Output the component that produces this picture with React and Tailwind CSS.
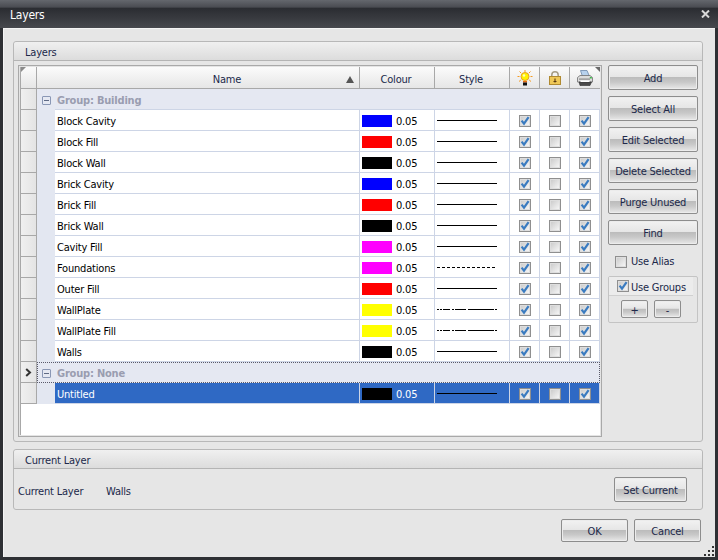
const font = "font-['Tahoma','DejaVu_Sans_Condensed','DejaVu_Sans',sans-serif] tracking-[-0.2px]";

const layers = [
  ["Block Cavity", "bg-[#0000ff]", "solid"],
  ["Block Fill", "bg-[#ff0000]", "solid"],
  ["Block Wall", "bg-black", "solid"],
  ["Brick Cavity", "bg-[#0000ff]", "solid"],
  ["Brick Fill", "bg-[#ff0000]", "solid"],
  ["Brick Wall", "bg-black", "solid"],
  ["Cavity Fill", "bg-[#ff00ff]", "solid"],
  ["Foundations", "bg-[#ff00ff]", "dash"],
  ["Outer Fill", "bg-[#ff0000]", "solid"],
  ["WallPlate", "bg-[#ffff00]", "chain"],
  ["WallPlate Fill", "bg-[#ffff00]", "chain"],
  ["Walls", "bg-black", "solid"],
];

function Check({ on, className = "" }) {
  return (
    <span className={`block w-[12px] h-[12px] border border-[#8f8f8f] bg-gradient-to-br from-[#c8c8c8] to-[#fafafa] shadow-[inset_0_0_0_1px_#dedede] shrink-0 ${className}`}>
      {on && (
        <svg viewBox="0 0 10 10" className="block w-full h-full">
          <path d="M1.6 4.6 L4 7.6 L8.6 1.2" fill="none" stroke="#3a7bc0" strokeWidth="2.2" />
        </svg>
      )}
    </span>
  );
}

function Btn({ label, className = "" }) {
  return (
    <button className={`flex items-center justify-center rounded-[2px] border border-[#8d8d8d] pt-[2px] bg-[linear-gradient(to_bottom,#f2f2f2_0%,#e6e6e6_46%,#bcbcbc_50%,#c8c8c8_70%,#e8e8e8_100%)] text-[#20284a] text-[11px] leading-none shadow-[inset_0_0_0_1px_#ececec] ${className}`}>
      {label}
    </button>
  );
}

function Line({ kind }) {
  return (
    <svg width="60" height="4" className="block mt-[2px]">
      {kind === "solid" && <line x1="0" x2="60" y1="1.5" y2="1.5" stroke="#000" strokeWidth="1" />}
      {kind === "dash" && <line x1="0" x2="60" y1="1.5" y2="1.5" stroke="#000" strokeWidth="1" strokeDasharray="3 2" />}
      {kind === "chain" && <path d="M0 1.5H2M3 1.5H5M6 1.5H13M15 1.5H17M18 1.5H29M31 1.5H57M58 1.5H60" stroke="#000" strokeWidth="1" fill="none" />}
    </svg>
  );
}

function Row({ name, color, line, selected }) {
  const text = selected ? "text-white bg-[#2f69c4]" : "text-black bg-white";
  const bd = "border-r border-b border-[#cdd5e6]";
  return (
    <div className="flex h-[21px]">
      <Indicator />
      <div className="w-[18px] bg-[#e3e7f1] shrink-0" />
      <div className={`w-[305px] pl-[2px] flex items-center text-[11px] ${bd} ${text} shrink-0`}>
        <span className="mt-[4px]">{name}</span>
      </div>
      <div className={`w-[75px] flex items-center pl-[2px] gap-[4px] text-[11px] ${bd} ${text} shrink-0`}>
        <span className={`w-[30px] h-[12px] mt-[2px] ${color}`} />
        <span className="mt-[4px]">0.05</span>
      </div>
      <div className={`w-[75px] flex items-center pl-[2px] ${bd} ${text} shrink-0`}><Line kind={line} /></div>
      {[true, false, true].map((on, i) => (
        <div key={i} className={`w-[30px] flex items-center justify-center ${bd} ${text} shrink-0 pl-px`}><Check on={on} className="mt-[2px]" /></div>
      ))}
    </div>
  );
}

function Indicator({ arrow }) {
  return (
    <div className="w-[16px] shrink-0 border-r border-b border-[#a8a8a8] bg-[linear-gradient(to_right,#f0f0f0,#e4e4e4)] flex items-center justify-center">
      {arrow && (
        <svg width="7" height="9" viewBox="0 0 7 9"><path d="M1.2 1 L5 4.5 L1.2 8" fill="none" stroke="#333" strokeWidth="2" /></svg>
      )}
    </div>
  );
}

function Group({ name, focus }) {
  return (
    <div className="flex h-[21px]">
      <Indicator arrow={focus} />
      <div className={`flex-1 bg-[#e5e8f2] flex items-center pl-[5px] text-[11px] font-bold text-[#9a9db0] ${focus ? "outline outline-1 -outline-offset-1 outline-dotted outline-[#5a5a6a]" : "bg-[linear-gradient(#cdd5e6,#cdd5e6)] bg-no-repeat bg-[position:18px_100%] bg-[size:100%_1px]"}`}>
        <span className="w-[9px] h-[9px] rounded-[1px] border border-[#8a97b5] flex items-center justify-center mr-[6px] mt-[2px] shrink-0">
          <span className="w-[5px] h-px bg-[#5f6a85]" />
        </span>
        <span className="mt-[4px]">{name}</span>
      </div>
    </div>
  );
}

function Head({ w, children, last }) {
  return (
    <div className={`${w} shrink-0 flex items-center justify-center border-r border-[#a8a8a8] text-[11px] text-[#20284a] relative ${last ? "border-r-0" : ""}`}>
      {children}
    </div>
  );
}

const Lamp = () => (
  <svg width="16" height="16" viewBox="0 0 16 16">
    <path d="M8 0V2M2.5 1.5L4 3M13.5 1.5L12 3M0.5 6.5H2.5M13.5 6.5H15.5M2 11.5L3.8 10M14 11.5L12.2 10" stroke="#f59a20" strokeWidth="1" />
    <circle cx="8" cy="6.5" r="4" fill="#fff200" stroke="#e8a020" />
    <circle cx="7" cy="5.5" r="1.2" fill="#fffbc0" />
    <rect x="6" y="11" width="4" height="1.5" fill="#e86a10" />
    <rect x="6" y="12.5" width="4" height="3" fill="#111" />
  </svg>
);
const Lock = () => (
  <svg width="12" height="14" viewBox="0 0 12 14">
    <path d="M2.8 6V4a3.2 3.2 0 0 1 6.4 0V6" fill="none" stroke="#a59c84" strokeWidth="1.5" />
    <rect x="0.5" y="5.5" width="11" height="8" fill="#efc858" stroke="#b08a30" />
    <path d="M6 7.5v4M4.5 10.5h3" stroke="#5a3a10" strokeWidth="1.1" />
  </svg>
);
const Printer = () => (
  <svg width="16" height="16" viewBox="0 0 16 16">
    <path d="M3.5 0.5L10 0.5L12.5 6.5H5.5Z" fill="#b8d2ee" stroke="#6c88aa" strokeWidth="0.8" />
    <path d="M0.5 7.5L3 5.5H13L15.5 7.5V12H0.5Z" fill="#dcdcdc" stroke="#6e6e6e" strokeWidth="0.8" />
    <rect x="2" y="8.5" width="11" height="1.2" fill="#8a8a8a" />
    <rect x="12.8" y="7" width="2" height="1.5" fill="#3fb84a" />
    <path d="M2 12H14.5L13 15.5H3Z" fill="#4a4a4a" stroke="#2e2e2e" strokeWidth="0.6" />
    <rect x="3.5" y="10.5" width="9" height="1.5" fill="#fff" />
  </svg>
);

function GroupHead({ children }) {
  return (
    <div className="h-[19px] pl-[11px] pt-[4px] flex items-center text-[11px] text-[#20284a] rounded-t-[3px] border-b border-[#b4b4b4] bg-[linear-gradient(to_bottom,#f0f0f0,#dcdcdc)]">
      {children}
    </div>
  );
}

export default function App() {
  return (
    <div className={`${font} w-[718px] h-[560px] flex flex-col bg-[#2e3034] overflow-hidden`}>
      <div className="h-[28px] shrink-0 flex items-center justify-between pl-[10px] pr-[8px] bg-[linear-gradient(to_bottom,#64676d_0%,#4a4c52_25%,#2b2d32_30%,#3a3c41_70%,#47494e_100%)]">
        <span className="text-white text-[12px] mt-[1px]">Layers</span>
        <svg width="9" height="8" viewBox="0 0 9 8" className="mt-[-1px]"><path d="M1 0.5L8 7.5M8 0.5L1 7.5" stroke="#d8d8d8" strokeWidth="2" /></svg>
      </div>
      <div className="flex-1 mx-[3px] mb-[3px] bg-[#e6e6e6] border-t border-l border-[#f4f4f4] relative flex flex-col pt-[12px] pl-[9px] pr-[12px]">
        <div className="h-[401px] shrink-0 rounded-[3px] border border-[#b8b8b8] flex flex-col">
          <GroupHead>Layers</GroupHead>
          <div className="flex flex-1 pt-[4px] pl-[4px] pb-[4px]">
            <div className="w-[584px] h-[372px] border border-[#a9a9a9] bg-[#e4e4e4] p-px flex flex-col shrink-0">
              <div className="flex-1 border-l border-[#a8a8a8] bg-white flex flex-col overflow-hidden relative">
                <div className="h-[22px] flex shrink-0 border-b border-[#a8a8a8] bg-[linear-gradient(to_bottom,#fbfbfb,#e6e6e6)]">
                  <Head w="w-[16px]" />
                  <Head w="w-[323px]">
                    <span className="pl-[58px] mt-[6px]">Name</span>
                    <svg width="8" height="7" viewBox="0 0 8 7" className="absolute right-[5px] top-[9px]"><path d="M4 0L8 7H0Z" fill="#555" /></svg>
                  </Head>
                  <Head w="w-[75px]"><span className="mt-[6px] mr-[2px]">Colour</span></Head>
                  <Head w="w-[75px]"><span className="mt-[6px] mr-[2px]">Style</span></Head>
                  <Head w="w-[30px]"><Lamp /></Head>
                  <Head w="w-[30px]"><Lock /></Head>
                  <Head w="w-[30px]" last><Printer /></Head>
                </div>
                <svg width="5" height="5" viewBox="0 0 5 5" className="absolute left-0 top-0"><path d="M0 0H5L0 5Z" fill="#8a8a8a" /></svg>
                <svg width="5" height="5" viewBox="0 0 5 5" className="absolute right-0 top-0"><path d="M0 0H5V5Z" fill="#6a6a6a" /></svg>
                <Group name="Group: Building" />
                {layers.map(([n, c, l]) => <Row key={n} name={n} color={c} line={l} />)}
                <Group name="Group: None" focus />
                <Row name="Untitled" color="bg-black" line="solid" selected />
              </div>
            </div>
            <div className="ml-[6px] w-[90px] flex flex-col shrink-0">
              <div className="flex flex-col gap-[6px]">
                {["Add", "Select All", "Edit Selected", "Delete Selected", "Purge Unused", "Find"].map((b) => (
                  <Btn key={b} label={b} className="w-[90px] h-[25px]" />
                ))}
              </div>
              <div className="flex items-center gap-[4px] pl-[7px] mt-[10px] h-[13px] text-[11px] text-[#20284a]">
                <Check /> <span className="mt-[2px]">Use Alias</span>
              </div>
              <div className="mt-[8px] h-[47px] rounded-[2px] border border-[#c4c4c4] flex flex-col">
                <div className="h-[19px] w-[84px] flex items-center gap-[2px] pl-[8px] text-[11px] text-[#20284a] bg-[#ececec] border-b border-[#d0d0d0]">
                  <Check on /> <span className="mt-[5px]">Use Groups</span>
                </div>
                <div className="flex gap-[6px] pl-[12px] pt-[4px]">
                  <Btn label="+" className="w-[27px] h-[18px]" />
                  <Btn label="-" className="w-[27px] h-[18px]" />
                </div>
              </div>
            </div>
          </div>
        </div>
        <div className="mt-[7px] h-[61px] shrink-0 rounded-[3px] border border-[#b8b8b8] flex flex-col">
          <GroupHead>Current Layer</GroupHead>
          <div className="flex items-center flex-1 pl-[4px] pr-[15px] text-[11px] text-[#20284a]">
            <span className="w-[88px] mt-[6px]">Current Layer</span>
            <span className="mt-[6px]">Walls</span>
            <Btn label="Set Current" className="ml-auto mt-[1px] w-[73px] h-[25px]" />
          </div>
        </div>
        <div className="flex justify-end gap-[6px] mt-[9px] pr-[2px]">
          <Btn label="OK" className="w-[67px] h-[23px]" />
          <Btn label="Cancel" className="w-[67px] h-[23px]" />
        </div>
        <svg width="10" height="10" viewBox="0 0 10 10" className="absolute right-[1px] bottom-[1px]">
          <path d="M8 0h2v2H8zM4 4h2v2H4zM8 4h2v2H8zM0 8h2v2H0zM4 8h2v2H4zM8 8h2v2H8z" fill="#333" />
        </svg>
      </div>
    </div>
  );
}
